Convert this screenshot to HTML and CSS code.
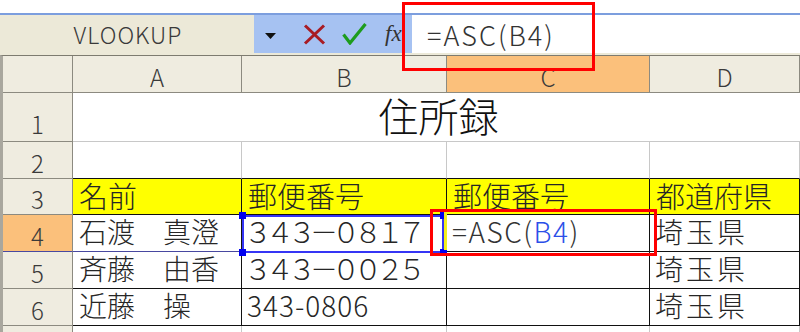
FILE: index.html
```html
<!DOCTYPE html>
<html lang="ja">
<head>
  <meta charset="UTF-8">
  <title>住所録 - ASC関数</title>
  <link rel="stylesheet" href="styles.css">
</head>
<body>
  <div class="app">
    <div class="top-strip"></div>

    <div class="formula-bar">
      <div class="name-box">VLOOKUP</div>
      <div class="tools">
        <svg class="drop" width="11" height="6" viewBox="0 0 11 6"><path d="M0 0h11L5.5 6z" fill="#111"/></svg>
        <svg class="cancel" width="23" height="21" viewBox="0 0 23 21"><path d="M2 1.5L21 19.5M21 1.5L2 19.5" stroke="#a81c24" stroke-width="3" fill="none"/></svg>
        <svg class="enter" width="25" height="22" viewBox="0 0 25 22"><path d="M1.5 11.5L8 20L23.5 1" stroke="#1d9c1d" stroke-width="3.2" fill="none"/></svg>
        <span class="fx">fx</span>
      </div>
      <div class="formula-input">=ASC(B4)</div>
    </div>

    <div class="sheet">
      <!-- column headers -->
      <div class="hd corner"></div>
      <div class="hd">A</div>
      <div class="hd">B</div>
      <div class="hd hd-active">C</div>
      <div class="hd">D</div>

      <!-- row 1 -->
      <div class="rh rh-tall">1</div>
      <div class="cell title">住所録</div>

      <!-- row 2 -->
      <div class="rh">2</div>
      <div class="cell top-edge"></div>
      <div class="cell top-edge"></div>
      <div class="cell top-edge"></div>
      <div class="cell top-edge"></div>

      <!-- row 3 -->
      <div class="rh">3</div>
      <div class="tc head">名前</div>
      <div class="tc head">郵便番号</div>
      <div class="tc head">郵便番号</div>
      <div class="tc head">都道府県</div>

      <!-- row 4 -->
      <div class="rh rh-active">4</div>
      <div class="tc name sel-row">石渡　真澄</div>
      <div class="tc zen">３４３－０８１７</div>
      <div class="tc formula">=ASC(<span class="ref">B4</span>)</div>
      <div class="tc pref">埼玉県</div>

      <!-- row 5 -->
      <div class="rh">5</div>
      <div class="tc name">斉藤　由香</div>
      <div class="tc zen">３４３－００２５</div>
      <div class="tc"></div>
      <div class="tc pref">埼玉県</div>

      <!-- row 6 -->
      <div class="rh">6</div>
      <div class="tc name">近藤　操</div>
      <div class="tc han">343-0806</div>
      <div class="tc"></div>
      <div class="tc pref">埼玉県</div>

      <!-- row 7 (only its top edge is in view) -->
      <div class="rh"></div>
      <div class="cell"></div>
      <div class="cell"></div>
      <div class="cell"></div>
      <div class="cell"></div>
    </div>

    <!-- range marker for B4 and annotations -->
    <div class="ref-box">
      <span class="handle h-tl"></span>
      <span class="handle h-bl"></span>
      <span class="handle h-tr"></span>
      <span class="handle h-br"></span>
    </div>
    <div class="gap-fill"></div>
    <div class="mark mark-formula"></div>
    <div class="mark mark-cell"></div>
  </div>
</body>
</html>
```

FILE: styles.css
```css
body {
  margin: 0;
  background: #fff;
  font-family: "Noto Sans CJK JP", "Noto Sans", sans-serif;
  font-weight: 300;
  color: #262626;
}

.app {
  position: relative;
  width: 800px;
  height: 332px;
  overflow: hidden;
}

.top-strip {
  height: 13px;
  background: #fff;
}

/* formula bar */
.formula-bar {
  display: flex;
  height: 40px;
  border-top: 2px solid #7c9ede;
  background: #ece9d8;
}

.name-box {
  width: 254px;
  height: 38px;
  display: flex;
  justify-content: center;
  align-items: center;
  font-size: 23px;
  letter-spacing: 1px;
  color: #3a3a3a;
  padding-left: 2px;
  box-sizing: border-box;
}

.tools {
  width: 158px;
  height: 38px;
  background: #a6c2f2;
  display: flex;
  align-items: center;
}

.drop {
  margin-left: 11px;
  margin-top: 3px;
}

.cancel {
  margin-left: 27px;
}

.enter {
  margin-left: 16px;
}

.fx {
  margin-left: 18px;
  font-family: "Liberation Serif", serif;
  font-style: italic;
  font-size: 23px;
  color: #333;
}

.formula-input {
  flex: 1;
  height: 38px;
  background: #fff;
  display: flex;
  align-items: center;
  padding-left: 15px;
  font-size: 27px;
  letter-spacing: 2px;
  color: #333;
}

/* sheet grid */
.sheet {
  display: grid;
  grid-template-columns: 70px 169px 205px 203px 1fr;
  grid-template-rows: 37px 49px 37px 36px 37px 37px 37px 37px;
  border-top: 1px solid #7d7b70;
  border-left: 3px solid #a9a79e;
}

.sheet > div {
  box-sizing: border-box;
  display: flex;
  align-items: flex-end;
  line-height: 1.2;
  white-space: nowrap;
}

.hd, .rh {
  background: #efece0;
  border-right: 1px solid #8c8a80;
  border-bottom: 1px solid #8c8a80;
  justify-content: center;
  align-items: center;
  font-size: 24px;
  color: #3a3a3a;
}

.hd-active, .rh-active {
  background: #fbc07b;
}

.rh-active {
  border-bottom-color: #4848a0;
}

.rh-tall {
  align-items: flex-end;
  padding-bottom: 2px;
}

.cell {
  border-right: 1px solid #c8c8c8;
  border-bottom: 1px solid #c8c8c8;
}

.title {
  grid-column: span 4;
  border-right: none;
  justify-content: center;
  padding: 0 0 2px 4px;
  font-size: 40px;
  line-height: 1.1;
  color: #111;
}

.top-edge {
  border-bottom-color: #111;
}

.tc {
  border-right: 1px solid #111;
  border-bottom: 1px solid #111;
  padding: 0 0 2px 6px;
  font-size: 28px;
}

.head {
  background: #ffff00;
  font-size: 29px;
  line-height: 1.15;
  padding-bottom: 1px;
}

.sel-row {
  border-bottom-color: #4848a0;
}

.zen {
  padding-left: 2px;
  letter-spacing: -6px;
}

.han {
  padding-left: 5px;
  letter-spacing: 1px;
}

.formula {
  padding-left: 5px;
  letter-spacing: 1.5px;
  color: #333;
}

.ref {
  color: #2b4fe8;
}

.pref {
  padding-left: 5px;
  font-size: 28px;
  line-height: 1.15;
  letter-spacing: 3px;
}

/* overlays */
.ref-box {
  position: absolute;
  left: 242px;
  top: 215px;
  width: 202px;
  height: 38px;
  box-sizing: border-box;
  border: 2px solid #3535f5;
}

.handle {
  position: absolute;
  width: 7px;
  height: 7px;
  background: #0000f0;
}

.h-tl { left: -5px; top: -5px; }
.h-bl { left: -5px; bottom: -5px; }
.h-tr { right: -5px; top: -5px; }
.h-br { right: -5px; bottom: -5px; }

.gap-fill {
  position: absolute;
  left: 444px;
  top: 212px;
  width: 3px;
  height: 38px;
  background: #f2ee20;
}

.mark {
  position: absolute;
  box-sizing: border-box;
  border: 3px solid #ff0000;
}

.mark-formula {
  left: 402px;
  top: 2px;
  width: 193px;
  height: 69px;
}

.mark-cell {
  left: 430px;
  top: 209px;
  width: 227px;
  height: 47px;
}
```
